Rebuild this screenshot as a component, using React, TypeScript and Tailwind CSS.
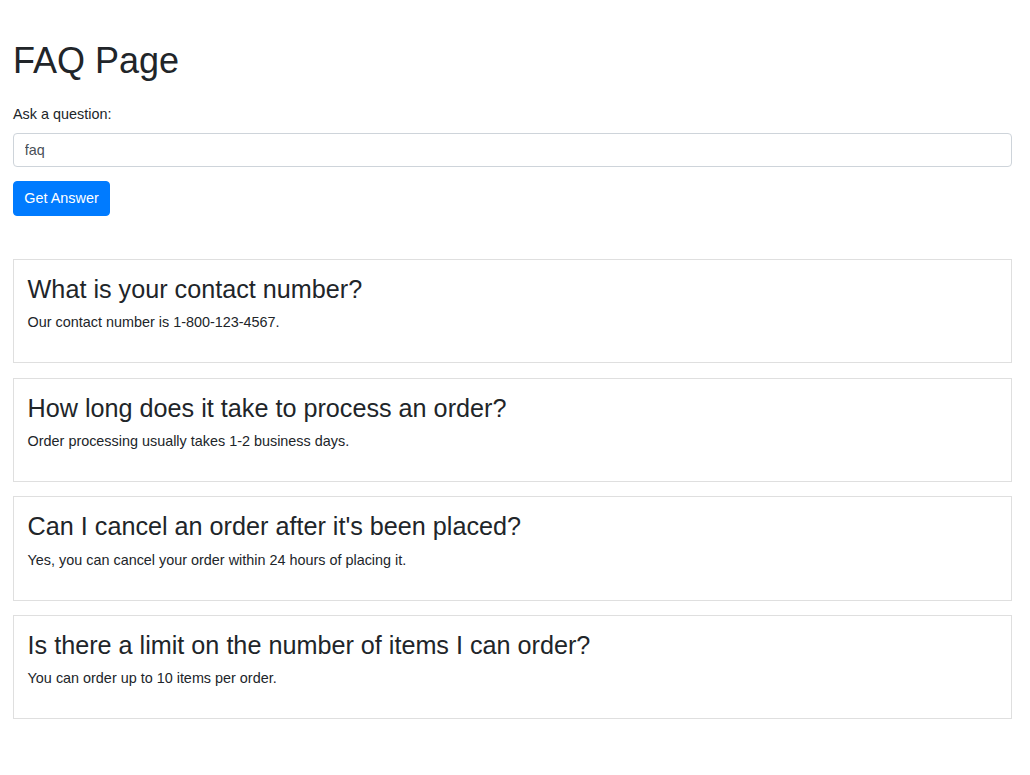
const faqs = [
  {
    q: "What is your contact number?",
    a: "Our contact number is 1-800-123-4567.",
  },
  {
    q: "How long does it take to process an order?",
    a: "Order processing usually takes 1-2 business days.",
  },
  {
    q: "Can I cancel an order after it's been placed?",
    a: "Yes, you can cancel your order within 24 hours of placing it.",
  },
  {
    q: "Is there a limit on the number of items I can order?",
    a: "You can order up to 10 items per order.",
  },
];

const FaqCard = ({ q, a }: { q: string; a: string }) => {
  return (
    <div className="border border-[#dfdfdf] px-[13.6px] pt-[13.8px] pb-[14px]">
      <h3 className="text-[25.2px] leading-[30.24px] font-normal mb-[8.2px]">{q}</h3>
      <p className="text-[14.4px] leading-[21.6px] mb-[14.4px]">{a}</p>
    </div>
  );
};

export default function App() {
  return (
    <div
      className="min-h-screen bg-white text-[#212529] pl-[13px] pr-[18px] pt-[39px]"
      style={{ fontFamily: '"Liberation Sans", Arial, sans-serif' }}
    >
      <h1 className="text-[36px] leading-[43.2px] font-normal mb-[21.8px]">FAQ Page</h1>

      <label className="block text-[14.4px] leading-[21.6px] mb-[7.2px]">Ask a question:</label>
      <input
        type="text"
        defaultValue="faq"
        className="block w-full h-[34.4px] px-[10.8px] text-[14.4px] text-[#495057] border border-[#ced4da] rounded-[4px] outline-none mb-[14px]"
      />
      <button className="h-[34.4px] px-[10.3px] text-[14.4px] text-white bg-[#007bff] border border-[#007bff] rounded-[4px] mb-[43.6px]">
        Get Answer
      </button>

      <div className="flex flex-col gap-[14.4px]">
        {faqs.map((f) => (
          <FaqCard key={f.q} q={f.q} a={f.a} />
        ))}
      </div>
    </div>
  );
}
